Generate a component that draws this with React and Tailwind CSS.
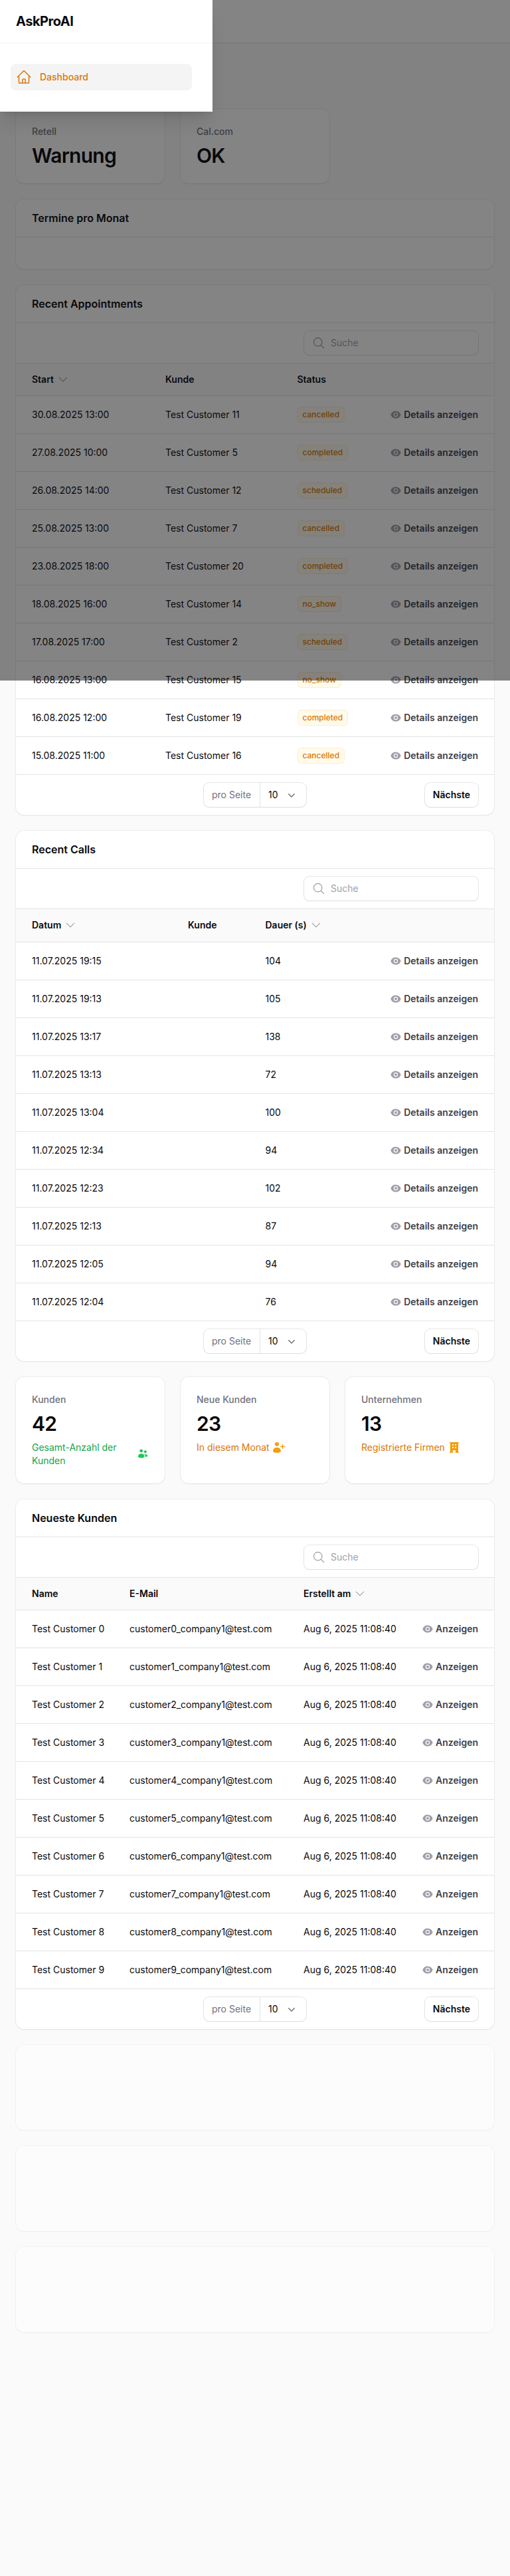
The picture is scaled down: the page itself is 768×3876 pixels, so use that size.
import React from "react";
import {
  HiMiniEye,
  HiMiniChevronDown,
  HiOutlineChevronDown,
  HiOutlineMagnifyingGlass,
  HiOutlineHome,
  HiMiniUsers,
  HiMiniUserPlus,
  HiMiniBuildingOffice,
} from "react-icons/hi2";

const appointments = [
  ["30.08.2025 13:00", "Test Customer 11", "cancelled"],
  ["27.08.2025 10:00", "Test Customer 5", "completed"],
  ["26.08.2025 14:00", "Test Customer 12", "scheduled"],
  ["25.08.2025 13:00", "Test Customer 7", "cancelled"],
  ["23.08.2025 18:00", "Test Customer 20", "completed"],
  ["18.08.2025 16:00", "Test Customer 14", "no_show"],
  ["17.08.2025 17:00", "Test Customer 2", "scheduled"],
  ["16.08.2025 13:00", "Test Customer 15", "no_show"],
  ["16.08.2025 12:00", "Test Customer 19", "completed"],
  ["15.08.2025 11:00", "Test Customer 16", "cancelled"],
];

const calls = [
  ["11.07.2025 19:15", "104"],
  ["11.07.2025 19:13", "105"],
  ["11.07.2025 13:17", "138"],
  ["11.07.2025 13:13", "72"],
  ["11.07.2025 13:04", "100"],
  ["11.07.2025 12:34", "94"],
  ["11.07.2025 12:23", "102"],
  ["11.07.2025 12:13", "87"],
  ["11.07.2025 12:05", "94"],
  ["11.07.2025 12:04", "76"],
];

const customers = [0, 1, 2, 3, 4, 5, 6, 7, 8, 9];

function Card({ children, className = "" }) {
  return <div className={`bg-white rounded-xl shadow-xs ring-1 ring-zinc-950/5 ${className}`}>{children}</div>;
}

function CardHeading({ children }) {
  return <h2 className="px-6 py-4 h-[57px] text-base leading-6 font-semibold text-zinc-950 border-b border-zinc-200">{children}</h2>;
}

function Toolbar() {
  return (
    <div className="flex justify-end px-6 py-3 h-[61px] border-b border-zinc-200">
      <label className="flex items-center w-[262px] h-9 rounded-lg bg-white ring-1 ring-zinc-950/10 shadow-xs pl-3">
        <HiOutlineMagnifyingGlass className="w-5 h-5 text-zinc-400 shrink-0" />
        <input
          readOnly
          placeholder="Suche"
          className="ml-2 w-full bg-transparent text-sm text-zinc-950 placeholder:text-zinc-400 outline-none"
        />
      </label>
    </div>
  );
}

function Pagination() {
  return (
    <div className="grid grid-cols-3 items-center px-6 py-3 h-[60px]">
      <div />
      <div className="flex justify-center">
        <div className="flex items-center h-9 w-[154px] rounded-lg ring-1 ring-zinc-950/10 shadow-xs bg-white text-sm">
          <span className="px-3 text-zinc-500 whitespace-nowrap w-[85px] border-r border-zinc-200 h-9 leading-9">pro Seite</span>
          <span className="pl-3 text-zinc-950">10</span>
          <HiMiniChevronDown className="ml-auto mr-3 w-5 h-5 text-zinc-500" />
        </div>
      </div>
      <div className="flex justify-end">
        <button className="h-9 px-3 rounded-lg bg-white ring-1 ring-zinc-950/10 shadow-xs text-sm font-semibold text-zinc-950">Nächste</button>
      </div>
    </div>
  );
}

function Th({ children, sort, className = "" }) {
  return (
    <th className={`pl-6 h-[49px] text-left text-sm font-semibold text-zinc-950 ${className}`}>
      <span className="inline-flex items-center gap-1">
        {children}
        {sort && <HiOutlineChevronDown className="w-[18px] h-[18px] ml-[1px] text-zinc-400" />}
      </span>
    </th>
  );
}

function Td({ children }) {
  return <td className="pl-6 h-[57px] text-sm text-zinc-950 whitespace-nowrap">{children}</td>;
}

function Action({ label }) {
  return (
    <td className="pr-6 h-[57px] whitespace-nowrap">
      <span className="flex justify-end items-center gap-1 text-sm font-semibold text-zinc-700">
        <HiMiniEye className="w-4 h-4 text-zinc-400" />
        {label}
      </span>
    </td>
  );
}

function Badge({ children }) {
  return (
    <span className="inline-flex items-center h-6 rounded-md px-2 bg-[#fffbeb] text-xs font-medium text-[#d97706] ring-1 ring-inset ring-[#d97706]/10 align-middle">
      {children}
    </span>
  );
}

function Stat({ label, value, desc, icon, tone }) {
  return (
    <Card className="p-6">
      <div className="text-sm leading-5 font-medium text-zinc-500">{label}</div>
      <div className="mt-2 text-3xl leading-9 font-semibold tracking-tight text-zinc-950">{value}</div>
      {desc && (
        <div className={`mt-2 flex items-center gap-1 text-sm leading-5 ${tone === "green" ? "text-[#16a34a]" : "text-[#d97706]"}`}>
          <span className={tone === "green" ? "flex-1" : ""}>{desc}</span>
          {icon}
        </div>
      )}
    </Card>
  );
}

export default function App() {
  return (
    <div className="relative min-h-[3876px] bg-zinc-50 font-[family-name:Inter,sans-serif] text-zinc-950 antialiased">
      <div className="h-16 bg-white shadow-xs ring-1 ring-zinc-950/5" />

      <main className="px-6 pt-[99.7px] flex flex-col gap-6">
        <div className="grid grid-cols-3 gap-6">
          <Stat label="Retell" value="Warnung" />
          <Stat label="Cal.com" value="OK" />
        </div>

        <Card>
          <CardHeading>Termine pro Monat</CardHeading>
          <div className="h-12" />
        </Card>

        <Card>
          <CardHeading>Recent Appointments</CardHeading>
          <Toolbar />
          <table className="w-full table-fixed">
            <colgroup>
              <col className="w-[201px]" />
              <col className="w-[198.5px]" />
              <col />
              <col className="w-[170px]" />
            </colgroup>
            <thead className="bg-zinc-50 border-b border-zinc-200">
              <tr>
                <Th sort>Start</Th>
                <Th>Kunde</Th>
                <Th>Status</Th>
                <th />
              </tr>
            </thead>
            <tbody>
              {appointments.map((r) => (
                <tr key={r[0] + r[1]} className="border-b border-zinc-200">
                  <Td>{r[0]}</Td>
                  <Td>{r[1]}</Td>
                  <Td><Badge>{r[2]}</Badge></Td>
                  <Action label="Details anzeigen" />
                </tr>
              ))}
            </tbody>
          </table>
          <Pagination />
        </Card>

        <Card>
          <CardHeading>Recent Calls</CardHeading>
          <Toolbar />
          <table className="w-full table-fixed">
            <colgroup>
              <col className="w-[235px]" />
              <col className="w-[116.5px]" />
              <col />
              <col className="w-[170px]" />
            </colgroup>
            <thead className="bg-zinc-50 border-b border-zinc-200">
              <tr>
                <Th sort>Datum</Th>
                <Th>Kunde</Th>
                <Th sort>Dauer (s)</Th>
                <th />
              </tr>
            </thead>
            <tbody>
              {calls.map((r) => (
                <tr key={r[0]} className="border-b border-zinc-200">
                  <Td>{r[0]}</Td>
                  <Td />
                  <Td>{r[1]}</Td>
                  <Action label="Details anzeigen" />
                </tr>
              ))}
            </tbody>
          </table>
          <Pagination />
        </Card>

        <div className="grid grid-cols-3 gap-6">
          <Stat
            label="Kunden"
            value="42"
            desc="Gesamt-Anzahl der Kunden"
            tone="green"
            icon={<HiMiniUsers className="w-[16.4px] h-[16.4px] mr-[0.6px] text-[#22c55e] shrink-0" />}
          />
          <Stat
            label="Neue Kunden"
            value="23"
            desc="In diesem Monat"
            icon={<HiMiniUserPlus className="w-5 h-5 text-[#f59e0b] shrink-0" />}
          />
          <Stat
            label="Unternehmen"
            value="13"
            desc="Registrierte Firmen"
            icon={<HiMiniBuildingOffice className="w-5 h-5 text-[#f59e0b] shrink-0" />}
          />
        </div>

        <Card>
          <CardHeading>Neueste Kunden</CardHeading>
          <Toolbar />
          <table className="w-full table-fixed">
            <colgroup>
              <col className="w-[147px]" />
              <col className="w-[262px]" />
              <col />
              <col className="w-[120px]" />
            </colgroup>
            <thead className="bg-zinc-50 border-b border-zinc-200">
              <tr>
                <Th>Name</Th>
                <Th>E-Mail</Th>
                <Th sort>Erstellt am</Th>
                <th />
              </tr>
            </thead>
            <tbody>
              {customers.map((i) => (
                <tr key={i} className="border-b border-zinc-200">
                  <Td>{`Test Customer ${i}`}</Td>
                  <Td>{`customer${i}_company1@test.com`}</Td>
                  <Td>Aug 6, 2025 11:08:40</Td>
                  <Action label="Anzeigen" />
                </tr>
              ))}
            </tbody>
          </table>
          <Pagination />
        </Card>

        <Card className="h-32 opacity-50" />
        <Card className="h-32 opacity-50" />
        <Card className="h-32 opacity-50" />
      </main>

      <div className="absolute top-0 left-0 w-full h-[1024px] bg-zinc-950/50" />

      <aside className="absolute top-0 left-0 w-80 bg-white shadow-xl">
        <div className="flex items-center h-16 px-6 shadow-[0_1px_0_0_rgba(9,9,11,0.05)]">
          <span className="text-xl font-bold tracking-tight text-zinc-950">AskProAI</span>
        </div>
        <nav className="py-8 pl-4">
          <a className="flex items-center gap-3 w-[273px] h-10 px-2 rounded-lg bg-zinc-100 text-sm font-medium text-[#d97706]">
            <HiOutlineHome className="w-6 h-6" />
            Dashboard
          </a>
        </nav>
      </aside>
    </div>
  );
}
